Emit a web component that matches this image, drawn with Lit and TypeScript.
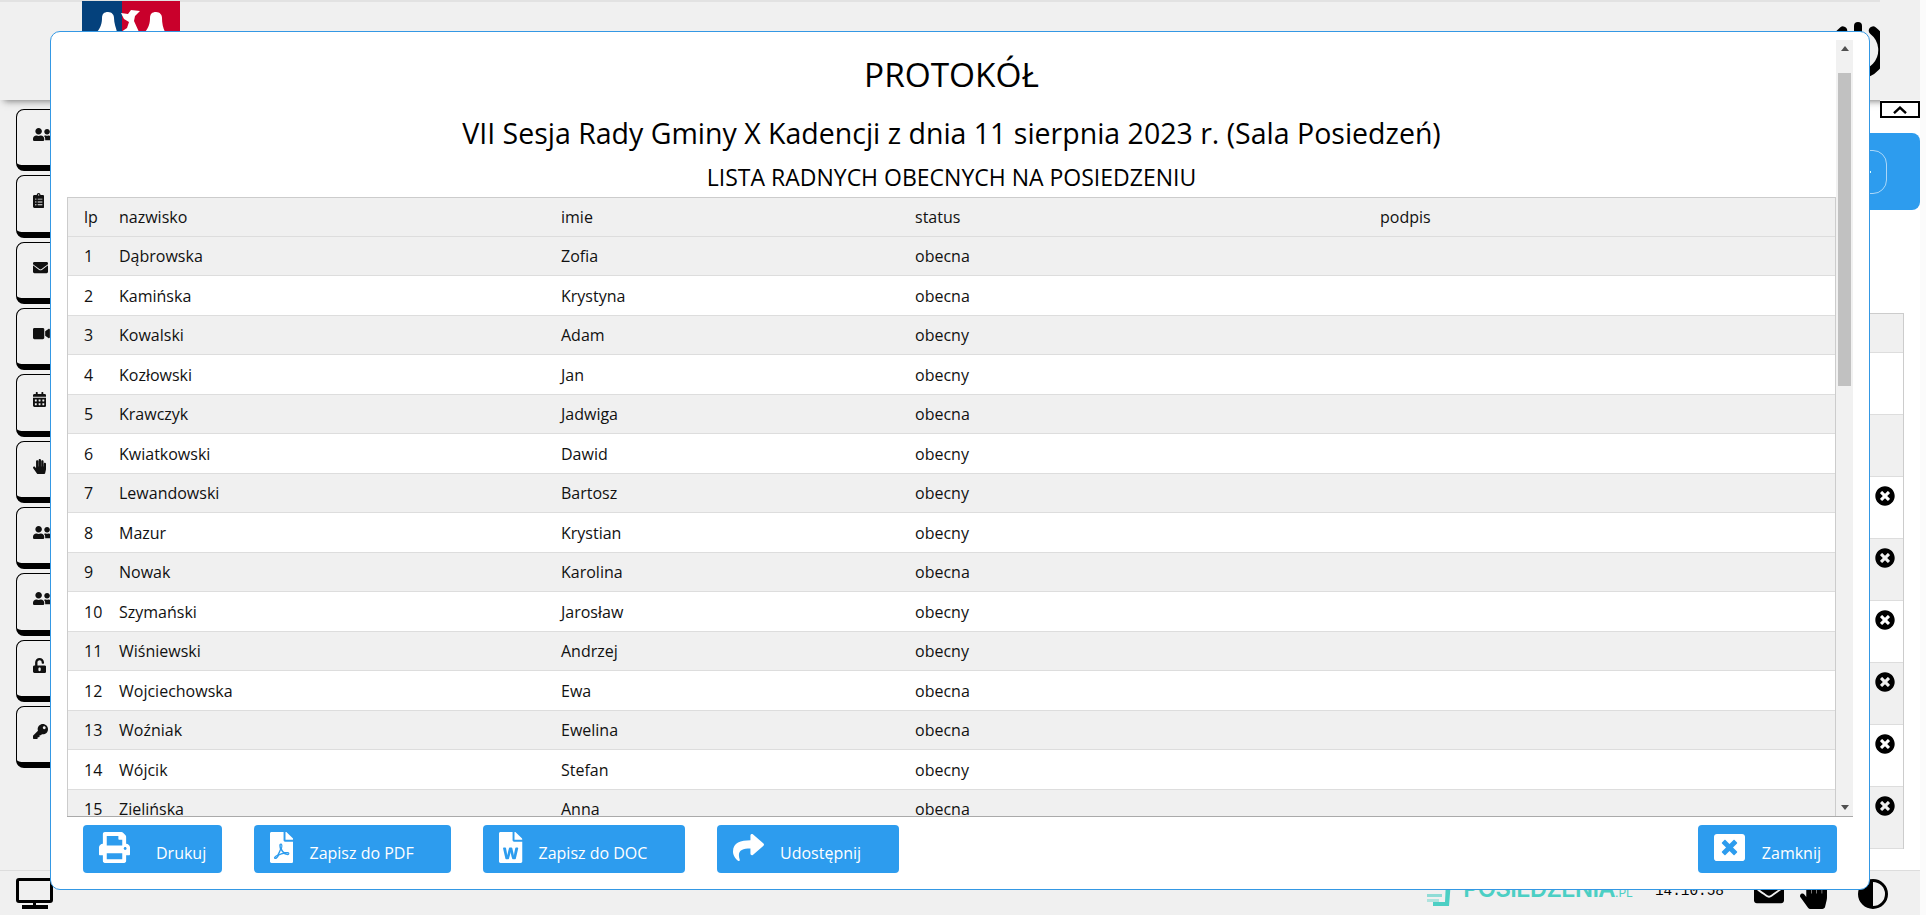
import { LitElement, html, css } from "lit";
import { customElement } from "lit/decorators.js";

const P = {
  friends: ["0 0 640 512", "M192 256c61.9 0 112-50.1 112-112S253.9 32 192 32 80 82.1 80 144s50.1 112 112 112zm76.8 32h-8.3c-20.8 10-43.9 16-68.5 16s-47.6-6-68.5-16h-8.3C51.6 288 0 339.6 0 403.2V432c0 26.5 21.5 48 48 48h288c26.5 0 48-21.5 48-48v-28.8c0-63.6-51.6-115.2-115.2-115.2zM480 256c53 0 96-43 96-96s-43-96-96-96-96 43-96 96 43 96 96 96zm48 32h-3.8c-13.9 4.8-28.6 8-44.2 8s-30.3-3.2-44.2-8H432c-20.4 0-39.2 5.9-55.7 15.4 24.4 26.3 39.7 61.2 39.7 99.8v38.4c0 2.2-.5 4.3-.6 6.4H592c26.5 0 48-21.5 48-48 0-61.9-50.1-112-112-112z"],
  clipboard: ["0 0 384 512", "M336 64h-80c0-35.3-28.7-64-64-64s-64 28.7-64 64H48C21.5 64 0 85.5 0 112v352c0 26.5 21.5 48 48 48h288c26.5 0 48-21.5 48-48V112c0-26.5-21.5-48-48-48zM96 424c-13.3 0-24-10.7-24-24s10.7-24 24-24 24 10.7 24 24-10.7 24-24 24zm0-96c-13.3 0-24-10.7-24-24s10.7-24 24-24 24 10.7 24 24-10.7 24-24 24zm0-96c-13.3 0-24-10.7-24-24s10.7-24 24-24 24 10.7 24 24-10.7 24-24 24zm96-192c13.3 0 24 10.7 24 24s-10.7 24-24 24-24-10.7-24-24 10.7-24 24-24zm128 368c0 4.4-3.6 8-8 8H168c-4.4 0-8-3.6-8-8v-16c0-4.4 3.6-8 8-8h144c4.4 0 8 3.6 8 8v16zm0-96c0 4.4-3.6 8-8 8H168c-4.4 0-8-3.6-8-8v-16c0-4.4 3.6-8 8-8h144c4.4 0 8 3.6 8 8v16zm0-96c0 4.4-3.6 8-8 8H168c-4.4 0-8-3.6-8-8v-16c0-4.4 3.6-8 8-8h144c4.4 0 8 3.6 8 8v16z"],
  envelope: ["0 0 512 512", "M502.3 190.8c3.9-3.1 9.7-.2 9.7 4.7V400c0 26.5-21.5 48-48 48H48c-26.5 0-48-21.5-48-48V195.6c0-5 5.7-7.8 9.7-4.7 22.4 17.4 52.1 39.5 154.1 113.6 21.1 15.4 56.7 47.8 92.2 47.6 35.7.3 72-32.8 92.3-47.6 102-74.1 131.6-96.3 154-113.7zM256 320c23.2.4 56.6-29.2 73.4-41.4 132.7-96.3 142.8-104.7 173.4-128.7 5.8-4.5 9.2-11.5 9.2-18.9v-19c0-26.5-21.5-48-48-48H48C21.5 64 0 85.5 0 112v19c0 7.4 3.4 14.3 9.2 18.9 30.6 23.9 40.7 32.4 173.4 128.7 16.8 12.2 50.2 41.8 73.4 41.4z"],
  video: ["0 0 576 512", "M336.2 64H47.8C21.4 64 0 85.4 0 111.8v288.4C0 426.6 21.4 448 47.8 448h288.4c26.4 0 47.8-21.4 47.8-47.8V111.8c0-26.4-21.4-47.8-47.8-47.8zm189.4 37.7L416 177.3v157.4l109.6 75.5c21.2 14.6 50.4-.3 50.4-25.8V127.5c0-25.4-29.1-40.4-50.4-25.8z"],
  calendar: ["0 0 448 512", "M0 464c0 26.5 21.5 48 48 48h352c26.5 0 48-21.5 48-48V192H0v272zm320-196c0-6.6 5.4-12 12-12h40c6.6 0 12 5.4 12 12v40c0 6.6-5.4 12-12 12h-40c-6.6 0-12-5.4-12-12v-40zm0 128c0-6.6 5.4-12 12-12h40c6.6 0 12 5.4 12 12v40c0 6.6-5.4 12-12 12h-40c-6.6 0-12-5.4-12-12v-40zM192 268c0-6.6 5.4-12 12-12h40c6.6 0 12 5.4 12 12v40c0 6.6-5.4 12-12 12h-40c-6.6 0-12-5.4-12-12v-40zm0 128c0-6.6 5.4-12 12-12h40c6.6 0 12 5.4 12 12v40c0 6.6-5.4 12-12 12h-40c-6.6 0-12-5.4-12-12v-40zM64 268c0-6.6 5.4-12 12-12h40c6.6 0 12 5.4 12 12v40c0 6.6-5.4 12-12 12H76c-6.6 0-12-5.4-12-12v-40zm0 128c0-6.6 5.4-12 12-12h40c6.6 0 12 5.4 12 12v40c0 6.6-5.4 12-12 12H76c-6.6 0-12-5.4-12-12v-40zM400 64h-48V16c0-8.8-7.2-16-16-16h-32c-8.8 0-16 7.2-16 16v48H160V16c0-8.8-7.2-16-16-16h-32c-8.8 0-16 7.2-16 16v48H48C21.5 64 0 85.5 0 112v48h448v-48c0-26.5-21.5-48-48-48z"],
  hand: ["0 0 448 512", "M408.781 128.007C386.356 127.578 368 146.36 368 168.79V256h-8V79.79c0-22.43-18.356-41.212-40.781-40.783C297.488 39.423 280 57.169 280 79v177h-8V40.79C272 18.36 253.644-.422 231.219.007 209.488.423 192 18.169 192 40v216h-8V80.79c0-22.43-18.356-41.212-40.781-40.783C121.488 40.423 104 58.169 104 80v235.992l-31.648-43.519c-12.993-17.866-38.009-21.817-55.877-8.823-17.865 12.994-21.815 38.01-8.822 55.877l125.601 172.705A48 48 0 0 0 172.073 512h197.59c22.274 0 41.622-15.324 46.724-37.006l26.508-112.66a192.011 192.011 0 0 0 5.104-43.975V168c.001-21.831-17.487-39.577-39.218-39.993z"],
  unlock: ["0 0 448 512", "M400 256H152V152.9c0-39.6 31.7-72.5 71.3-72.9 40-.4 72.7 32.1 72.7 72v16c0 13.3 10.7 24 24 24h32c13.3 0 24-10.7 24-24v-16C376 68 307.5-.3 223.5 0 139.5.3 72 69.5 72 153.5V256H48c-26.5 0-48 21.5-48 48v160c0 26.5 21.5 48 48 48h352c26.5 0 48-21.5 48-48V304c0-26.5-21.5-48-48-48zM264 408c0 22-18 40-40 40s-40-18-40-40v-48c0-22 18-40 40-40s40 18 40 40z"],
  key: ["0 0 512 512", "M512 176.001C512 273.203 433.202 352 336 352c-11.22 0-22.19-1.062-32.827-3.069l-24.012 27.014A23.999 23.999 0 0 1 261.223 384H224v40c0 13.255-10.745 24-24 24h-40v40c0 13.255-10.745 24-24 24H24c-13.255 0-24-10.745-24-24v-78.059c0-6.365 2.529-12.47 7.029-16.971l161.802-161.802C163.108 213.814 160 195.271 160 176 160 78.798 238.797.001 335.999 0 433.488-.001 512 78.511 512 176.001zM336 128c0 26.51 21.49 48 48 48s48-21.49 48-48-21.49-48-48-48-48 21.49-48 48z"],
  print: ["0 0 512 512", "M448 192V77.25c0-8.49-3.37-16.62-9.37-22.63L393.37 9.37c-6-6-14.14-9.37-22.63-9.37H96C78.33 0 64 14.33 64 32v160c-35.35 0-64 28.65-64 64v112c0 8.84 7.16 16 16 16h48v96c0 17.67 14.33 32 32 32h320c17.67 0 32-14.33 32-32v-96h48c8.84 0 16-7.16 16-16V256c0-35.35-28.65-64-64-64zm-64 256H128v-96h256v96zm0-224H128V64h192v48c0 8.84 7.16 16 16 16h48v96zm48 72c-13.25 0-24-10.75-24-24 0-13.26 10.75-24 24-24s24 10.74 24 24c0 13.25-10.75 24-24 24z"],
  pdf: ["0 0 384 512", "M181.9 256.1c-5-16-4.9-46.9-2-46.9 8.4 0 7.6 36.9 2 46.9zm-1.7 47.2c-7.7 20.2-17.3 43.3-28.4 62.7 18.3-7 39-17.2 62.9-21.9-12.7-9.6-24.9-23.4-34.5-40.8zM86.1 428.1c0 .8 13.2-5.4 34.9-40.2-6.7 6.3-29.1 24.5-34.9 40.2zM248 160h136v328c0 13.3-10.7 24-24 24H24c-13.3 0-24-10.7-24-24V24C0 10.7 10.7 0 24 0h200v136c0 13.2 10.8 24 24 24zm-8 171.8c-20-12.2-33.3-29-42.7-53.8 4.5-18.5 11.6-46.6 6.2-64.2-4.7-29.4-42.4-26.5-47.8-6.8-5 18.3-.4 44.1 8.1 77-11.6 27.6-28.7 64.6-40.8 85.8-.1 0-.1.1-.2.1-27.1 13.9-73.6 44.5-54.5 68 5.6 6.9 16 10 21.5 10 17.9 0 35.7-18 61.1-61.8 25.8-8.5 54.1-19.1 79-23.2 21.7 11.8 47.1 19.5 64 19.5 29.2 0 31.2-32 19.7-43.4-13.9-13.6-54.3-9.7-73.6-7.2zM377 105L279 7c-4.5-4.5-10.6-7-17-7h-6v128h128v-6.1c0-6.3-2.5-12.4-7-16.9zm-74.1 255.3c4.1-2.7-2.5-11.9-42.8-9 37.1 15.8 42.8 9 42.8 9z"],
  word: ["0 0 384 512", "M224 136V0H24C10.7 0 0 10.7 0 24v464c0 13.3 10.7 24 24 24h336c13.3 0 24-10.7 24-24V160H248c-13.2 0-24-10.8-24-24zm57.1 120H305c7.7 0 13.4 7.1 11.7 14.7l-38 168c-1.2 5.5-6.1 9.3-11.7 9.3h-38c-5.5 0-10.3-3.8-11.6-9.1-25.8-103.5-20.8-81.2-25.6-110.5h-.5c-1.1 14.3-2.4 17.4-25.6 110.5-1.3 5.3-6.1 9.1-11.6 9.1H117c-5.6 0-10.5-3.9-11.7-9.4l-37.8-168c-1.7-7.5 4-14.6 11.7-14.6h24.5c5.7 0 10.7 4 11.8 9.7 15.6 78 20.1 109.5 21 122.2 1.6-10.2 7.3-32.7 29.4-122.7 1.3-5.4 6.1-9.1 11.7-9.1h29.1c5.6 0 10.4 3.8 11.7 9.2 24 100.4 28.8 124 29.6 129.4-.2-11.2-2.6-17.8 21.6-129.2 1-5.6 5.9-9.5 11.5-9.5zM384 121.9v6.1H256V0h6.1c6.4 0 12.5 2.5 17 7l97.9 98c4.5 4.5 7 10.6 7 16.9z"],
  share: ["0 0 512 512", "M503.691 189.836L327.687 37.851C312.281 24.546 288 35.347 288 56.015v80.053C127.371 137.907 0 170.1 0 322.326c0 61.441 39.581 122.309 83.333 154.132 13.653 9.931 33.111-2.533 28.077-18.631C66.066 312.814 132.917 274.316 288 272.085V360c0 20.7 24.3 31.453 39.687 18.164l176.004-152c11.071-9.562 11.086-26.753 0-36.328z"],
  winclose: ["0 0 512 512", "M464 32H48C21.5 32 0 53.5 0 80v352c0 26.5 21.5 48 48 48h416c26.5 0 48-21.5 48-48V80c0-26.5-21.5-48-48-48zm-83.6 290.5c4.8 4.8 4.8 12.6 0 17.4l-40.5 40.5c-4.8 4.8-12.6 4.8-17.4 0L256 313.3l-66.5 67.1c-4.8 4.8-12.6 4.8-17.4 0l-40.5-40.5c-4.8-4.8-4.8-12.6 0-17.4l67.1-66.5-67.1-66.5c-4.8-4.8-4.8-12.6 0-17.4l40.5-40.5c4.8-4.8 12.6-4.8 17.4 0l66.5 67.1 66.5-67.1c4.8-4.8 12.6-4.8 17.4 0l40.5 40.5c4.8 4.8 4.8 12.6 0 17.4L313.3 256l67.1 66.5z"],
  xcircle: ["0 0 512 512", "M256 8C119 8 8 119 8 256s111 248 248 248 248-111 248-248S393 8 256 8zm121.6 313.1c4.7 4.7 4.7 12.3 0 17L338 377.6c-4.7 4.7-12.3 4.7-17 0L256 312l-65.1 65.6c-4.7 4.7-12.3 4.7-17 0L134.4 338c-4.7-4.7-4.7-12.3 0-17l65.6-65-65.6-65.1c-4.7-4.7-4.7-12.3 0-17l39.6-39.6c4.7-4.7 12.3-4.7 17 0l65 65.7 65.1-65.6c4.7-4.7 12.3-4.7 17 0l39.6 39.6c4.7 4.7 4.7 12.3 0 17L312 256l65.6 65.1z"],
} as const;

type IconName = keyof typeof P;
const icon = (n: IconName, cls: string) => html`<svg class=${cls} viewBox=${P[n][0]} fill="currentColor" fill-rule="evenodd"><path d=${P[n][1]}></path></svg>`;

const TABS: IconName[] = ["friends", "clipboard", "envelope", "video", "calendar", "hand", "friends", "friends", "unlock", "key"];
const PEOPLE: [string, string, string][] = [
  ["Dąbrowska", "Zofia", "obecna"],
  ["Kamińska", "Krystyna", "obecna"],
  ["Kowalski", "Adam", "obecny"],
  ["Kozłowski", "Jan", "obecny"],
  ["Krawczyk", "Jadwiga", "obecna"],
  ["Kwiatkowski", "Dawid", "obecny"],
  ["Lewandowski", "Bartosz", "obecny"],
  ["Mazur", "Krystian", "obecny"],
  ["Nowak", "Karolina", "obecna"],
  ["Szymański", "Jarosław", "obecny"],
  ["Wiśniewski", "Andrzej", "obecny"],
  ["Wojciechowska", "Ewa", "obecna"],
  ["Woźniak", "Ewelina", "obecna"],
  ["Wójcik", "Stefan", "obecny"],
  ["Zielińska", "Anna", "obecna"],
];

@customElement("app-root")
export class AppRoot extends LitElement {
  static styles = css`
    :host { display: block; position: relative; width: 1926px; height: 915px; overflow: hidden; background: #fbfbfb; font-family: "Open Sans", "Noto Sans", sans-serif; color: #111; }
    * { box-sizing: border-box; }
    .page { width: 1920px; height: 915px; display: grid; grid-template-rows: 100px 770px 45px; background: #f0f0f0; }

    .header { position: relative; z-index: 2; background: #f0f0f0; border-top: 2px solid #e2e2e2; box-shadow: 0 5px 7px -4px #777; display: flex; justify-content: space-between; clip-path: inset(0 40px -14px -10px); }
    .logo { width: 98px; height: 60px; margin-left: 82px; margin-top: -1px; }
    .power { width: 62px; height: 62px; margin: 17px 31px 0 0; color: #000; }

    .middle { display: grid; grid-template-columns: 60px 1fr; min-height: 0; }
    .side { background: #f0f0f0; padding: 9px 0 0 16px; display: flex; flex-direction: column; gap: 4px; overflow: hidden; }
    .tab { flex: 0 0 62.33px; width: 90px; border: 1px solid #000; border-bottom-width: 6px; border-radius: 8px 0 0 8px; padding: 17px 0 0 16px; background: #f0f0f0; }
    .tab svg { height: 15px; display: block; }

    .main { position: relative; background: #fff; padding-top: 33px; display: flex; flex-direction: column; }
    .collapse { position: absolute; top: 1px; right: 0; width: 40px; height: 17px; border: 2px solid #000; background: #fff; display: flex; align-items: center; justify-content: center; z-index: 3; }
    .collapse svg { width: 14px; height: 8px; }
    .hero { height: 77px; background: #2d9cee; border-radius: 0 8px 8px 0; display: flex; align-items: center; justify-content: flex-end; padding-right: 33px; }
    .pill { width: 120px; height: 44px; border: 1px solid rgba(255,255,255,.6); border-radius: 14px; display: flex; align-items: center; justify-content: flex-end; padding-right: 15px; }
    .dot { width: 2px; height: 2px; background: #dff; }
    .bg-table { margin: 103px 16px 0 0; border-top: 1px solid #ccc; border-right: 1px solid #ccc; }
    .bg-row { height: 62px; background: #fff; border-bottom: 1px solid #ddd; display: flex; justify-content: flex-end; padding: 9px 8px 0 0; }
    .bg-row.head { height: 39px; background: #f0f0f0; }
    .bg-row.alt { background: #f0f0f0; }
    .bg-row svg { width: 20px; height: 20px; color: #000; }

    .footer { background: #f0f0f0; border-top: 1px solid #ddd; display: flex; align-items: flex-start; padding: 7px 32px 0 16px; position: relative; }
    .monitor { width: 37px; height: 31px; }
    .brand { margin-left: auto; display: flex; align-items: flex-start; }
    .brand svg { width: 24px; height: 32px; margin: -3px 12px 0 0; }
    .brand-name { font-family: "Inter", sans-serif; font-weight: 600; font-size: 23.7px; line-height: 30px; color: #4ccfc4; letter-spacing: -.6px; white-space: nowrap; margin-top: -4px; }
    .brand-name small { font-size: 12px; font-weight: 400; letter-spacing: 0; }
    .time { font-family: "Liberation Mono", monospace; font-size: 14.4px; line-height: 16px; margin: 5px 0 0 22px; color: #000; }
    .mail { width: 30px; height: 32px; margin: -2px 0 0 30px; color: #000; }
    .hand { width: 27px; height: 31px; margin: 0 0 0 16px; color: #000; }
    .contrast { width: 30px; height: 30px; margin: 1px 0 0 31px; }

    .modal { position: absolute; left: 50px; top: 31px; width: 1820px; height: 859px; background: #fff; border: 1px solid #3498e4; border-radius: 10px; z-index: 5; display: flex; flex-direction: column; overflow: hidden; }
    .body { height: 777px; flex: none; margin: 8px 16px 0; display: flex; border-bottom: 1px solid #aaa; }
    .doc { flex: 1; min-width: 0; overflow: hidden; }
    .t1, .t2, .t3 { margin: 0; text-align: center; font-weight: 400; color: #000; }
    .t1 { font-size: 33.4px; line-height: 40px; margin-top: 14px; }
    .t2 { font-size: 28.5px; line-height: 38px; margin-top: 20px; }
    .t3 { font-size: 23px; line-height: 30px; margin: 10px 0 5px; }
    .grid { border: 1px solid #ccc; border-bottom: 0; }
    .row { display: grid; grid-template-columns: 35px 442px 354px 465px 1fr; height: 39.5px; align-items: center; padding-top: 1px; border-bottom: 1px solid #ddd; background: #fff; font-size: 16px; color: #111; }
    .row.first { height: 38.5px; }
    .row.alt { background: #f0f0f0; }
    .row span { padding-left: 16px; white-space: nowrap; }

    .sb { width: 17px; flex: none; background: #f1f1f1; display: flex; flex-direction: column; align-items: center; }
    .sb-up, .sb-down { height: 17px; flex: none; display: flex; align-items: center; justify-content: center; }
    .sb-up i { border: 4px solid transparent; border-top: 0; border-bottom: 5px solid #505050; }
    .sb-down i { border: 4px solid transparent; border-bottom: 0; border-top: 5px solid #505050; }
    .thumb { width: 13px; height: 313px; margin-top: 16px; background: #c1c1c1; }
    .sb-gap { flex: 1; }

    .actions { flex: 1; display: flex; gap: 32px; padding: 8px 32px 0; }
    .btn { height: 48px; background: #2d9cee; color: #fff; border-radius: 4px; display: flex; align-items: flex-start; padding: 7px 37.6px 0 16px; gap: 16px; font-size: 16px; white-space: nowrap; }
    .btn.tight { padding-right: 16px; }
    .btn.last { margin-left: auto; }
    .btn span { line-height: 20px; padding-top: 11px; }
    .btn svg { height: 31px; display: block; }
    .btn.tight svg { margin-right: 10px; }
    .btn.last svg { margin-right: 1px; }
  `;

  render() {
    return html`
      <div class="page">
        <header class="header">
          <svg class="logo" viewBox="0 0 98 60">
            <rect width="40" height="60" fill="#04417c"></rect>
            <rect x="40" width="58" height="60" fill="#c9002b"></rect>
            <path fill="#fff" d="M15 31C19 26 20 22 20 17C20 13 22 11 26 11C30 11 32 14 32 17C32 22 34 27 35 31V60H15Z"></path>
            <path fill="#fff" d="M39 12L46 13L49 9L58 10L53 15L52 20L57 31V60H39V31L45 27L47 21L42 18Z"></path>
            <path fill="#fff" d="M63 31C67 26 68 22 68 17C68 13 70 11 74 11C78 11 80 14 80 17C80 22 81 27 83 31V60H63Z"></path>
          </svg>
          <svg class="power" viewBox="0 0 62 62" fill="none" stroke="currentColor" stroke-linecap="round">
            <path stroke-width="8.5" d="M16 11.6A24.5 24.5 0 1 0 46 11.6"></path>
            <path stroke-width="8" d="M31 7V24"></path>
          </svg>
        </header>
        <div class="middle">
          <nav class="side">${TABS.map((t) => html`<div class="tab">${icon(t, "")}</div>`)}</nav>
          <main class="main">
            <div class="collapse"><svg viewBox="0 0 14 8" fill="none" stroke="#000" stroke-width="2.4"><path d="M1 7.2L7 1.6L13 7.2"></path></svg></div>
            <div class="hero"><div class="pill"><div class="dot"></div></div></div>
            <div class="bg-table">
              <div class="bg-row head"></div>
              <div class="bg-row"></div>
              <div class="bg-row alt"></div>
              ${[0, 1, 2, 3, 4, 5].map((i) => html`<div class="bg-row ${i % 2 ? "alt" : ""}">${icon("xcircle", "")}</div>`)}
            </div>
          </main>
        </div>
        <footer class="footer">
          <svg class="monitor" viewBox="0 0 37 31" fill="none" stroke="#000">
            <rect x="1.5" y="1.5" width="34" height="22" rx="1.5" stroke-width="3"></rect>
            <path stroke-width="3" d="M18.5 24V28"></path>
            <path stroke-width="4" d="M6 29H32"></path>
          </svg>
          <div class="brand">
            <svg viewBox="0 0 24 32" fill="#4ccfc4">
              <path d="M19 6H24L22 31H6V27H18Z"></path>
              <rect y="19" width="15" height="3" opacity=".6"></rect>
              <rect y="24" width="12" height="3" opacity=".4"></rect>
            </svg>
            <div class="brand-name">POSIEDZENIA<small>.PL</small></div>
          </div>
          <div class="time">14:10:58</div>
          ${icon("envelope", "mail")}
          ${icon("hand", "hand")}
          <svg class="contrast" viewBox="0 0 30 30">
            <circle cx="15" cy="15" r="13.5" fill="none" stroke="#000" stroke-width="3"></circle>
            <path d="M15 1A14 14 0 0 0 15 29Z" fill="#000"></path>
          </svg>
        </footer>
      </div>

      <section class="modal">
        <div class="body">
          <div class="doc">
            <h1 class="t1">PROTOKÓŁ</h1>
            <h2 class="t2">VII Sesja Rady Gminy X Kadencji z dnia 11 sierpnia 2023 r. (Sala Posiedzeń)</h2>
            <h3 class="t3">LISTA RADNYCH OBECNYCH NA POSIEDZENIU</h3>
            <div class="grid">
              <div class="row alt first"><span>lp</span><span>nazwisko</span><span>imie</span><span>status</span><span>podpis</span></div>
              ${PEOPLE.map((p, i) => html`<div class="row ${i % 2 ? "" : "alt"}"><span>${i + 1}</span><span>${p[0]}</span><span>${p[1]}</span><span>${p[2]}</span><span></span></div>`)}
            </div>
          </div>
          <div class="sb">
            <div class="sb-up"><i></i></div>
            <div class="thumb"></div>
            <div class="sb-gap"></div>
            <div class="sb-down"><i></i></div>
          </div>
        </div>
        <div class="actions">
          <div class="btn tight">${icon("print", "")}<span>Drukuj</span></div>
          <div class="btn">${icon("pdf", "")}<span>Zapisz do PDF</span></div>
          <div class="btn">${icon("word", "")}<span>Zapisz do DOC</span></div>
          <div class="btn">${icon("share", "")}<span>Udostępnij</span></div>
          <div class="btn tight last">${icon("winclose", "")}<span>Zamknij</span></div>
        </div>
      </section>
    `;
  }
}
